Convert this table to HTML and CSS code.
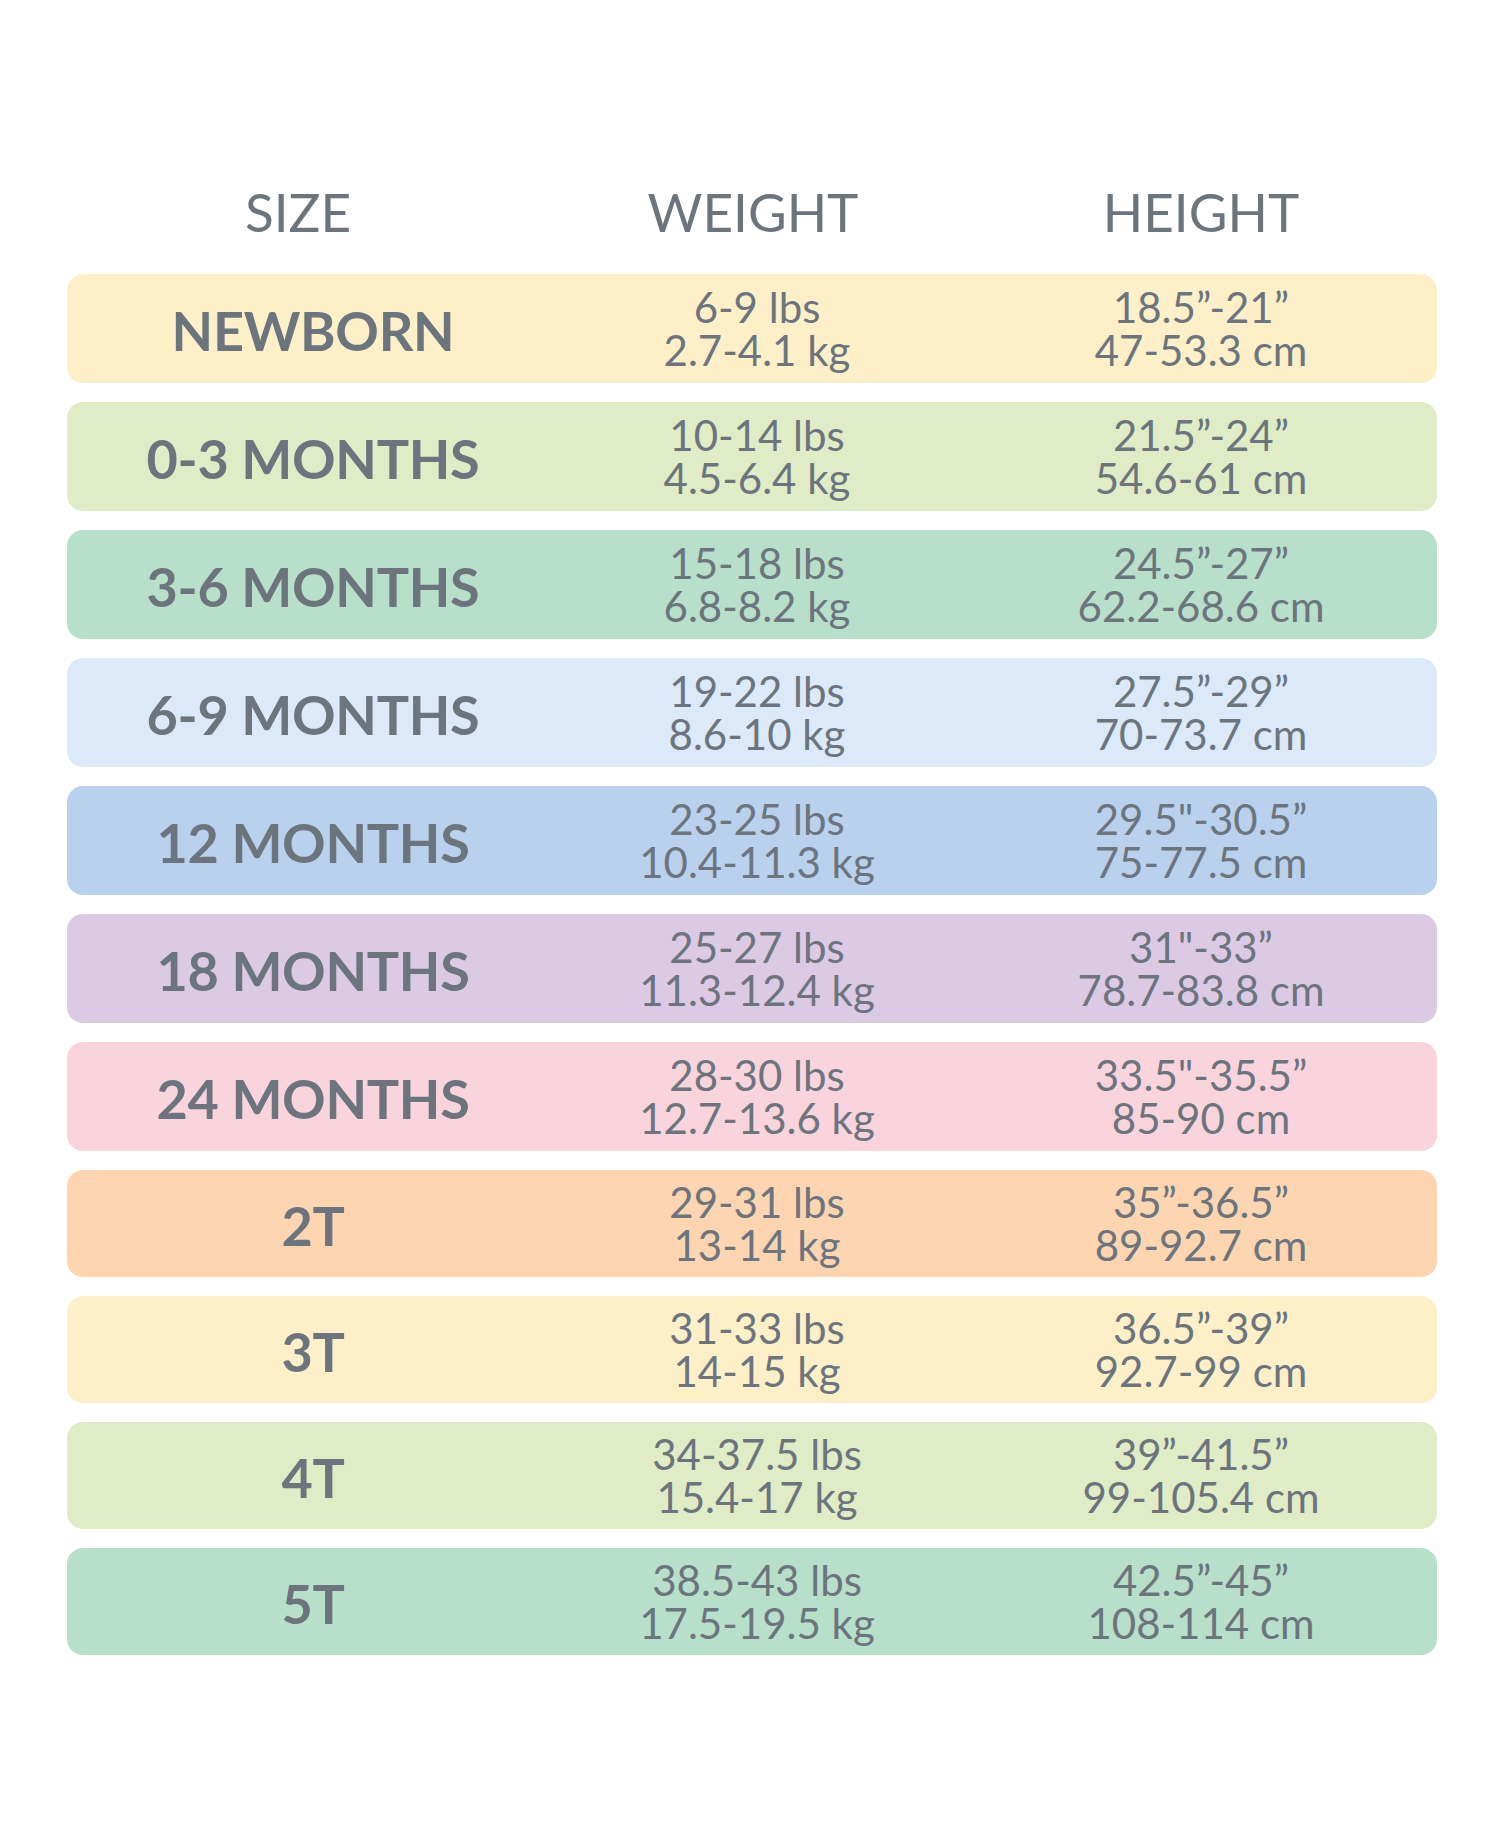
FILE: index.html
```html
<!DOCTYPE html>
<html>
<head>
    <title>Size Chart</title>
    <meta charset="UTF-8">
    <meta name="viewport" content="width=device-width, initial-scale=1.0">
    <link rel="stylesheet" href="styles.css">
</head>
<body>

<main class="size-chart">
    <div class="chart-head">
        <div class="head-cell head-size">SIZE</div>
        <div class="head-cell head-weight">WEIGHT</div>
        <div class="head-cell">HEIGHT</div>
    </div>

    <div class="chart-rows">
        <div class="size-row bg-yellow">
            <div class="size-label">NEWBORN</div>
            <div class="size-value">6-9 lbs<br>2.7-4.1 kg</div>
            <div class="size-value">18.5”-21”<br>47-53.3 cm</div>
        </div>
        <div class="size-row bg-lime">
            <div class="size-label">0-3 MONTHS</div>
            <div class="size-value">10-14 lbs<br>4.5-6.4 kg</div>
            <div class="size-value">21.5”-24”<br>54.6-61 cm</div>
        </div>
        <div class="size-row bg-mint">
            <div class="size-label">3-6 MONTHS</div>
            <div class="size-value">15-18 lbs<br>6.8-8.2 kg</div>
            <div class="size-value">24.5”-27”<br>62.2-68.6 cm</div>
        </div>
        <div class="size-row bg-sky">
            <div class="size-label">6-9 MONTHS</div>
            <div class="size-value">19-22 lbs<br>8.6-10 kg</div>
            <div class="size-value">27.5”-29”<br>70-73.7 cm</div>
        </div>
        <div class="size-row bg-blue">
            <div class="size-label">12 MONTHS</div>
            <div class="size-value">23-25 lbs<br>10.4-11.3 kg</div>
            <div class="size-value">29.5"-30.5”<br>75-77.5 cm</div>
        </div>
        <div class="size-row bg-lilac">
            <div class="size-label">18 MONTHS</div>
            <div class="size-value">25-27 lbs<br>11.3-12.4 kg</div>
            <div class="size-value">31"-33”<br>78.7-83.8 cm</div>
        </div>
        <div class="size-row bg-pink">
            <div class="size-label">24 MONTHS</div>
            <div class="size-value">28-30 lbs<br>12.7-13.6 kg</div>
            <div class="size-value">33.5"-35.5”<br>85-90 cm</div>
        </div>

        <!-- toddler sizes are a little shorter -->
        <div class="size-row toddler bg-peach">
            <div class="size-label">2T</div>
            <div class="size-value">29-31 lbs<br>13-14 kg</div>
            <div class="size-value">35”-36.5”<br>89-92.7 cm</div>
        </div>
        <div class="size-row toddler bg-yellow">
            <div class="size-label">3T</div>
            <div class="size-value">31-33 lbs<br>14-15 kg</div>
            <div class="size-value">36.5”-39”<br>92.7-99 cm</div>
        </div>
        <div class="size-row toddler bg-lime">
            <div class="size-label">4T</div>
            <div class="size-value">34-37.5 lbs<br>15.4-17 kg</div>
            <div class="size-value">39”-41.5”<br>99-105.4 cm</div>
        </div>
        <div class="size-row toddler bg-mint">
            <div class="size-label">5T</div>
            <div class="size-value">38.5-43 lbs<br>17.5-19.5 kg</div>
            <div class="size-value">42.5”-45”<br>108-114 cm</div>
        </div>
    </div>
</main>

</body>
</html>
```

FILE: styles.css
```css
/* Global styles */
body {
    background-color: #ffffff;
    color: #6c757e; /* Slate grey text */
    font-family: Lato, "Open Sans", sans-serif;
    margin: 0;
    padding: 0;
}

.size-chart {
    padding: 179px 63px 0 67px;
}

/* Column headings */
.chart-head {
    display: grid;
    grid-template-columns: 1fr 1fr 1fr;
    padding: 0 14px 0 24px;
    margin-bottom: 30px;
}

.head-cell {
    font-size: 53px;
    line-height: 65px;
    text-align: center;
}

.head-size {
    padding-right: 30px;
}

.head-weight {
    padding-right: 8px;
}

/* Rows */
.chart-rows {
    display: flex;
    flex-direction: column;
    gap: 19px;
}

.size-row {
    display: grid;
    grid-template-columns: 1fr 1fr 1fr;
    align-items: center;
    height: 109px;
    padding: 0 14px 0 24px;
    border-radius: 16px;
}

.size-row.toddler {
    height: 107px;
}

.size-label {
    font-size: 54px;
    font-weight: 700;
    letter-spacing: -0.3px;
    text-align: center;
    padding-top: 4px;
}

.size-value {
    font-size: 42px;
    line-height: 43px;
    text-align: center;
}

/* Row colours */
.bg-yellow { background-color: #fdf0c9; }
.bg-lime   { background-color: #e0ecc6; }
.bg-mint   { background-color: #b7dfca; }
.bg-sky    { background-color: #dbe9f8; }
.bg-blue   { background-color: #b9d1ec; }
.bg-lilac  { background-color: #dccae4; }
.bg-pink   { background-color: #f9d4dd; }
.bg-peach  { background-color: #fdd6b1; }
```
